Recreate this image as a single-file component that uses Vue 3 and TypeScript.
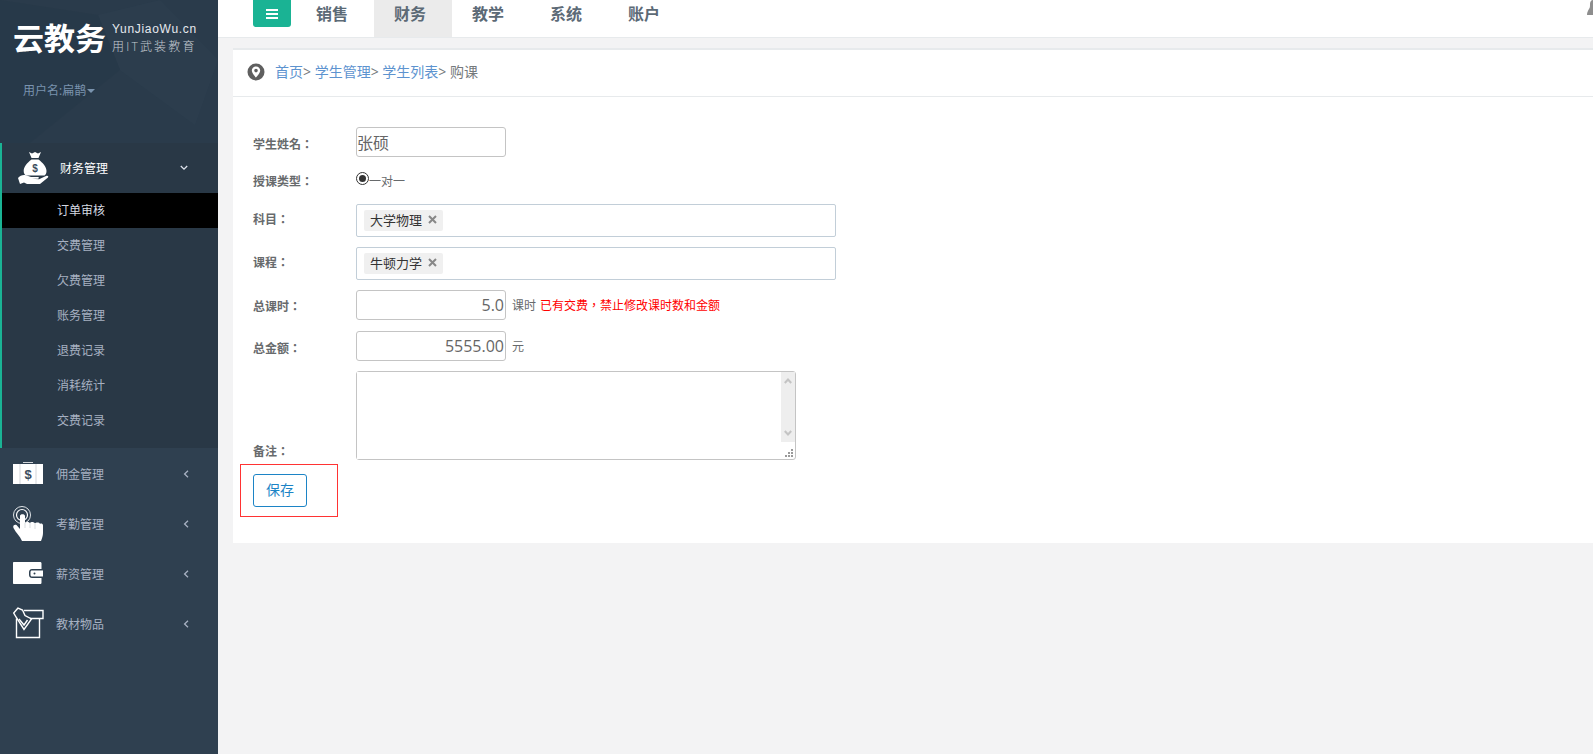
<script setup lang="ts">
interface MenuItem {
  name: string
  icon: string
}

const navItems = ['销售', '财务', '教学', '系统', '账户']
const subItems = ['订单审核', '交费管理', '欠费管理', '账务管理', '退费记录', '消耗统计', '交费记录']
const menuItems: MenuItem[] = [
  { name: '佣金管理', icon: 'case' },
  { name: '考勤管理', icon: 'hand' },
  { name: '薪资管理', icon: 'wallet' },
  { name: '教材物品', icon: 'box' },
]
</script>

<template>
  <div class="page">
    <aside class="sidebar">
      <div class="profile">
        <svg class="texture" width="218" height="143" viewBox="0 0 218 143">
          <polygon points="98,15 160,0 218,60 195,125 120,70" fill="#2e4051" opacity=".55" />
          <polygon points="0,0 98,15 120,70 30,143 0,143" fill="#263847" opacity=".6" />
        </svg>
        <div class="logo">
          <span class="logo-main">云教务</span>
          <div class="logo-side">
            <span class="logo-url">YunJiaoWu.cn</span>
            <span class="logo-slogan">用IT武装教育</span>
          </div>
        </div>
        <div class="user">用户名:扁鹊<i class="caret"></i></div>
      </div>

      <div class="menu-active">
        <div class="menu-head">
          <svg class="icon-bag" width="36" height="34" viewBox="0 0 36 34">
            <path fill="#fff" d="M11 1l3 1.500L17 1l3 1.500L23 1l-2.500 6h-7zM13.500 8.500h7C25 12 28.500 16 28.500 20c0 2-.7 3.500-2 4.500H8c-1.500-1-2.300-2.500-2.300-4.500 0-4 3.300-8 7.800-11.500z" />
            <path fill="#fff" d="M0 27c2-2.500 5-3.500 8-2.800l5 1.800h7c1 0 1.500 1.500 0 1.700h-6l7 .5 7-3.200c2-.7 3 .6 1.700 1.700L22 33H9l-3-1.500L2 33z" />
            <text x="17" y="21" text-anchor="middle" class="dollar">$</text>
          </svg>
          <span class="head-name">财务管理</span>
          <svg class="chev-down" width="8" height="6" viewBox="0 0 8 6"><path d="M.8 1l3.200 3.200L7.200 1" fill="none" stroke="#dfe4ed" stroke-width="1.300" /></svg>
        </div>
        <ul class="sub-list">
          <li v-for="(s, i) in subItems" :key="s" :class="{ current: i === 0 }">{{ s }}</li>
        </ul>
      </div>

      <div v-for="m in menuItems" :key="m.name" class="menu-row">
        <span class="menu-icon">
          <svg v-if="m.icon === 'case'" width="30" height="22" viewBox="0 0 30 22">
            <path fill="#fff" d="M0 2h30v20H0z" />
            <path fill="#d3d6da" d="M10 0h10v1H10zM6.500 2h1v20h-1zM22.500 2h1v20h-1z" />
            <text x="15" y="17" text-anchor="middle" class="dollar case">$</text>
          </svg>
          <svg v-else-if="m.icon === 'hand'" width="31" height="35" viewBox="0 0 31 35">
            <circle cx="9" cy="9" r="8.500" fill="none" stroke="#dfe3e7" stroke-width="1" />
            <circle cx="9" cy="9" r="5.500" fill="none" stroke="#fff" stroke-width="1.200" />
            <path fill="#fff" d="M7 10c0-2.500 5-2.500 5 0v7c1-1.500 4-1.500 5 0 1-1.500 4-1.500 5 .5 1-1.300 4.500-1.200 5 .5.700-.8 3-.5 3 1.500V27c0 3-1 5-2 8H9C7 30 3 27 .5 22c-1-2.500 1-4 3-3L7 23z" />
            <path fill="none" stroke="#c9ced3" stroke-width=".7" d="M12 17v5M17 17v5M22 18v5" />
          </svg>
          <svg v-else-if="m.icon === 'wallet'" width="30" height="22" viewBox="0 0 30 22">
            <path fill="#fff" fill-rule="evenodd" d="M1 0h26c1 0 1.500.5 1.500 1.500V7H19c-2 0-3 1.500-3 3v3c0 2 1.500 3 3 3h9.500v4.500c0 1-.5 1.500-1.500 1.500H1c-.6 0-1-.4-1-1V1c0-.6.4-1 1-1z" />
            <path fill="#fff" fill-rule="evenodd" d="M19 8.500h11v6H19c-1 0-1.500-.7-1.500-1.500v-3c0-.8.5-1.500 1.500-1.500zM21.500 10.500a1 1 0 100 2 1 1 0 000-2z" />
          </svg>
          <svg v-else width="31" height="32" viewBox="0 0 31 32" fill="none" stroke="#fff" stroke-width="1.400">
            <path d="M11 3.500h19V11.500H17" />
            <path d="M3.500 11.500V30.500H26.500V11.500" />
            <path d="M5 1L.7 6l2.300 4 8 12.500L18.500 12 12 8.500 9.500 3z" />
            <path d="M6 12l5 6 3.500-5" />
          </svg>
        </span>
        <span class="menu-name">{{ m.name }}</span>
        <svg class="chev-left" width="6" height="8" viewBox="0 0 6 8"><path d="M5 .8L1.600 4 5 7.200" fill="none" stroke="#a7b1c2" stroke-width="1.300" /></svg>
      </div>
    </aside>

    <main class="main">
      <header class="topbar">
        <button class="toggle" type="button"><i></i><i></i><i></i></button>
        <nav class="nav">
          <a v-for="n in navItems" :key="n" :class="{ on: n === '财务' }">{{ n }}</a>
        </nav>
        <svg class="corner-user" width="6" height="15" viewBox="0 0 6 15"><path fill="#8d8d8d" d="M6 0v15H0c0-3 1-4 2-6 1-1 1-3 1-5 0-2 1-4 3-4z" /></svg>
      </header>

      <section class="card">
        <div class="crumbs">
          <svg width="18" height="18" viewBox="0 0 18 18">
            <circle cx="9" cy="9" r="8.500" fill="#5f5f5f" />
            <path fill="#fff" fill-rule="evenodd" d="M9 3.500c-2.500 0-4.200 1.800-4.200 4 0 2.800 4.200 7 4.200 7s4.200-4.200 4.200-7c0-2.200-1.700-4-4.200-4zm0 2.300a1.800 1.800 0 110 3.600 1.800 1.800 0 010-3.600z" />
          </svg>
          <span class="trail"><a>首页</a>&gt; <a>学生管理</a>&gt; <a>学生列表</a>&gt; 购课</span>
        </div>

        <form class="form" @submit.prevent>
          <div class="row row-name">
            <label>学生姓名：</label>
            <input class="field name" value="张硕" />
          </div>
          <div class="row row-radio">
            <label>授课类型：</label>
            <span class="radio"><i></i></span><span class="radio-text">一对一</span>
          </div>
          <div class="row row-tags">
            <label>科目：</label>
            <div class="tags">
              <span class="tag">大学物理<svg width="9" height="9" viewBox="0 0 9 9"><path d="M1 1l7 7M8 1L1 8" stroke="#888" stroke-width="2" /></svg></span>
            </div>
          </div>
          <div class="row row-tags">
            <label>课程：</label>
            <div class="tags">
              <span class="tag">牛顿力学<svg width="9" height="9" viewBox="0 0 9 9"><path d="M1 1l7 7M8 1L1 8" stroke="#888" stroke-width="2" /></svg></span>
            </div>
          </div>
          <div class="row row-num">
            <label>总课时：</label>
            <input class="field num" value="5.0" />
            <span class="unit">课时</span>
            <span class="warn">已有交费，禁止修改课时数和金额</span>
          </div>
          <div class="row row-num row-amount">
            <label>总金额：</label>
            <input class="field num" value="5555.00" />
            <span class="unit">元</span>
          </div>
          <div class="row row-note">
            <label>备注：</label>
            <div class="note">
              <textarea></textarea>
              <div class="scroll">
                <svg width="8" height="6" viewBox="0 0 8 6"><path d="M.8 5L4 1.500 7.200 5" fill="none" stroke="#c4c4c4" stroke-width="2" /></svg>
                <svg width="8" height="6" viewBox="0 0 8 6"><path d="M.8 1L4 4.500 7.200 1" fill="none" stroke="#c4c4c4" stroke-width="2" /></svg>
              </div>
              <svg class="grip" width="8" height="8" viewBox="0 0 8 8"><path fill="#9a9a9a" d="M6 0h2v2H6zM3 3h2v2H3zM6 3h2v2H6zM0 6h2v2H0zM3 6h2v2H3zM6 6h2v2H6z" /></svg>
            </div>
          </div>
          <div class="save-box">
            <button class="save" type="submit">保存</button>
          </div>
        </form>
      </section>
    </main>
  </div>
</template>

<style scoped>
.page {
  display: flex;
  height: 754px;
  overflow: hidden;
  background: #f3f3f4;
  color: #676a6c;
  font-family: "Open Sans", "Noto Sans CJK SC", sans-serif;
}

.sidebar {
  flex: 0 0 218px;
  background: #2f4050;
}

.profile {
  position: relative;
  height: 143px;
  padding: 21px 0 0 13px;
  box-sizing: border-box;
  background: #2a3b4b;
}

.texture {
  position: absolute;
  top: 0;
  left: 0;
}

.logo {
  position: relative;
  display: flex;
  align-items: center;
  gap: 6px;
}

.logo-main {
  color: #fff;
  font-size: 31px;
  font-weight: 700;
  line-height: 34px;
}

.logo-side {
  display: flex;
  flex-direction: column;
  color: #e6e9ed;
}

.logo-url {
  font-size: 12px;
  line-height: 15px;
  letter-spacing: 0.7px;
  font-family: "Liberation Sans", sans-serif;
}

.logo-slogan {
  margin-top: 2px;
  font-size: 12px;
  line-height: 15px;
  font-weight: 300;
  letter-spacing: 2.2px;
  white-space: nowrap;
  color: #c5cbd2;
}

.user {
  position: relative;
  margin: 27px 0 0 10px;
  color: #7a93ae;
  font-size: 12px;
  line-height: 18px;
}

.caret {
  display: inline-block;
  margin-left: 1px;
  vertical-align: 2px;
  border-top: 4px solid #7a93ae;
  border-left: 4px solid transparent;
  border-right: 4px solid transparent;
}

.menu-active {
  height: 305px;
  border-left: 2px solid #1ab394;
  background: #293846;
  box-sizing: border-box;
}

.menu-head {
  display: flex;
  align-items: center;
  height: 50px;
  padding-left: 16px;
  box-sizing: border-box;
}

.head-name {
  margin-left: 6px;
  color: #fff;
  font-size: 12px;
}

.chev-down {
  margin-left: 72px;
}

.icon-bag {
  flex: none;
}

.dollar {
  fill: #3b4c5c;
  font: 700 10px "Liberation Sans", sans-serif;
}

.dollar.case {
  font-size: 13px;
}

.sub-list {
  margin: 0;
  padding: 0;
  list-style: none;
}

.sub-list li {
  height: 35px;
  padding: 1px 0 0 55px;
  box-sizing: border-box;
  color: #a7b1c2;
  font-size: 12px;
  line-height: 34px;
}

.sub-list li.current {
  background: #000;
  color: #d5dae3;
}

.menu-row {
  display: flex;
  align-items: center;
  height: 50px;
  padding-left: 13px;
}

.menu-icon {
  display: flex;
  justify-content: flex-start;
  flex: 0 0 43px;
}

.menu-name {
  flex: 0 0 127px;
  padding-top: 1px;
  color: #a7b1c2;
  font-size: 12px;
}

.chev-left {
  margin-top: 1px;
}

.main {
  flex: 1;
  min-width: 0;
}

.topbar {
  display: flex;
  position: relative;
  height: 38px;
  padding-left: 35px;
  box-sizing: border-box;
  background: #fff;
  border-bottom: 1px solid #e7eaec;
}

.toggle {
  display: flex;
  flex-direction: column;
  align-items: center;
  justify-content: center;
  gap: 2px;
  width: 38px;
  height: 27px;
  padding: 0;
  border: 0;
  border-radius: 0 0 3px 3px;
  background: #1ab394;
}

.toggle i {
  width: 12px;
  height: 2px;
  background: #fff;
}

.nav {
  display: flex;
  margin-left: 5px;
}

.nav a {
  width: 78px;
  padding: 3px 0 0 20px;
  box-sizing: border-box;
  color: #5c6a76;
  font-size: 16px;
  font-weight: 700;
  line-height: 22px;
}

.nav a.on {
  background: #ebebeb;
}

.corner-user {
  position: absolute;
  top: 0;
  right: 0;
}

.card {
  height: 495px;
  margin: 10px 0 0 15px;
  box-sizing: border-box;
  background: #fff;
  border-top: 2px solid #e7eaec;
}

.crumbs {
  display: flex;
  align-items: center;
  gap: 10px;
  height: 47px;
  padding: 0 0 4px 15px;
  box-sizing: border-box;
  border-bottom: 1px solid #e7eaec;
  font-size: 14px;
  color: #75797c;
}

.crumbs svg {
  margin: 1px 0 0 -1px;
}

.crumbs a {
  color: #5d93cf;
}

.form {
  padding: 30px 0 0 20px;
}

.row {
  display: flex;
  align-items: center;
}

.row label {
  flex: 0 0 103px;
  font-family: "Open Sans", "Noto Sans CJK TC", sans-serif;
  font-size: 12px;
  font-weight: 700;
}

.row-name {
  height: 30px;
}

.row-radio {
  height: 23px;
  margin-top: 12px;
}

.row-tags {
  height: 33px;
  margin-top: 12px;
}

.row-tags + .row-tags {
  margin-top: 10px;
}

.row-tags label {
  padding-bottom: 4px;
}

.row-num {
  height: 30px;
  margin-top: 10px;
}

.row-num label {
  padding-top: 2px;
}

.row-amount {
  margin-top: 11px;
}

.row-name label,
.row-amount label {
  padding-top: 4px;
}

.field {
  width: 150px;
  height: 30px;
  padding: 0 1px 0 0;
  box-sizing: border-box;
  border: 1px solid #c4c4c4;
  border-radius: 3px;
  color: #666;
  font: inherit;
  font-size: 16px;
  outline: none;
}

.num {
  text-align: right;
}

.radio {
  display: flex;
  align-items: center;
  justify-content: center;
  width: 13px;
  height: 13px;
  margin-top: -4px;
  box-sizing: border-box;
  border: 1px solid #333;
  border-radius: 50%;
}

.radio i {
  width: 7px;
  height: 7px;
  border-radius: 50%;
  background: #333;
}

.radio-text {
  font-size: 12px;
}

.tags {
  display: flex;
  align-items: center;
  width: 480px;
  height: 33px;
  padding-left: 7px;
  box-sizing: border-box;
  border: 1px solid #c2ced8;
  border-radius: 2px;
}

.tag {
  display: flex;
  align-items: center;
  height: 21px;
  padding: 0 6px 2px;
  box-sizing: border-box;
  border-radius: 2px;
  background: #f0f0f0;
  color: #333;
  font-size: 13px;
}

.tag svg {
  margin-left: 6px;
}

.unit {
  margin-left: 6px;
  font-size: 12px;
}

.warn {
  margin-left: 4px;
  color: #f00;
  font-family: "Open Sans", "Noto Sans CJK TC", sans-serif;
  font-size: 12px;
}

.row-note {
  align-items: flex-end;
  margin-top: 10px;
}

.row-note label {
  line-height: 16px;
}

.note {
  display: flex;
  position: relative;
  width: 440px;
  height: 89px;
  box-sizing: border-box;
  border: 1px solid #c4c4c4;
  border-radius: 3px;
}

.note textarea {
  flex: 1;
  border: 0;
  padding: 0;
  resize: none;
  outline: none;
}

.scroll {
  display: flex;
  flex-direction: column;
  align-items: center;
  justify-content: space-between;
  width: 14px;
  height: 70px;
  padding: 6px 0;
  box-sizing: border-box;
  background: #eee;
}

.grip {
  position: absolute;
  right: 2px;
  bottom: 2px;
}

.save-box {
  width: 98px;
  height: 53px;
  margin: 4px 0 0 -13px;
  padding: 9px 0 0 12px;
  box-sizing: border-box;
  border: 1px solid #f33;
}

.save {
  width: 54px;
  height: 33px;
  padding: 0 0 3px;
  border: 1px solid #1c84c6;
  border-radius: 3px;
  background: #fff;
  color: #1c84c6;
  font: inherit;
  font-size: 14px;
}
</style>
